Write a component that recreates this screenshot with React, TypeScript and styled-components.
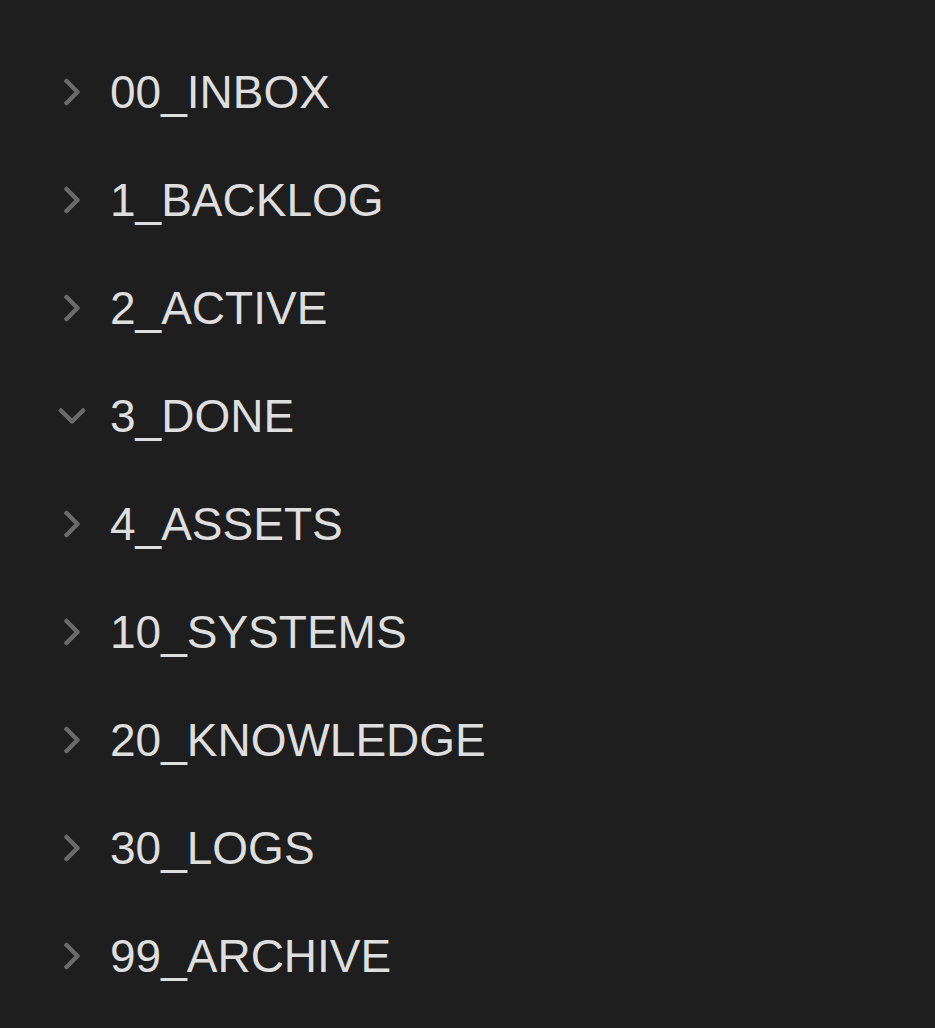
import { styled, createGlobalStyle } from 'styled-components';

const GlobalStyle = createGlobalStyle`
  html, body {
    margin: 0;
    padding: 0;
    background: #1e1e1e;
  }
`;

const folders = [
    { name: '00_INBOX', open: false },
    { name: '1_BACKLOG', open: false },
    { name: '2_ACTIVE', open: false },
    { name: '3_DONE', open: true },
    { name: '4_ASSETS', open: false },
    { name: '10_SYSTEMS', open: false },
    { name: '20_KNOWLEDGE', open: false },
    { name: '30_LOGS', open: false },
    { name: '99_ARCHIVE', open: false },
];

const Chevron = ({ open }: { open: boolean }) => (
    <StyledChevron viewBox="0 0 28 28" open={open}>
        <path d="M8.5 3 L19.5 14 L8.5 25" />
    </StyledChevron>
);

export default function App() {
    return (
        <>
            <GlobalStyle />
            <StyledTree>
                {folders.map(f => (
                    <StyledRow key={f.name}>
                        <Chevron open={f.open} />
                        <StyledLabel>{f.name}</StyledLabel>
                    </StyledRow>
                ))}
            </StyledTree>
        </>
    );
}

const StyledTree = styled.div`
    min-height: 100vh;
    box-sizing: border-box;
    padding: 38px 0 0 58px;
    background: #1e1e1e;
    display: flex;
    flex-direction: column;
`;

const StyledRow = styled.div`
    height: 108px;
    display: flex;
    align-items: center;
    gap: 24px;
`;

const StyledChevron = styled.svg<{ open: boolean }>`
    width: 28px;
    height: 28px;
    flex-shrink: 0;
    fill: none;
    stroke: #6a6a6a;
    stroke-width: 4.5;
    stroke-linecap: round;
    stroke-linejoin: round;
    transform: rotate(${({ open }) => (open ? '90deg' : '0deg')});
`;

const StyledLabel = styled.span`
    font-family: "Liberation Sans", Arial, sans-serif;
    font-size: 46px;
    color: #dedede;
    letter-spacing: 0;
    line-height: 1;
`;
